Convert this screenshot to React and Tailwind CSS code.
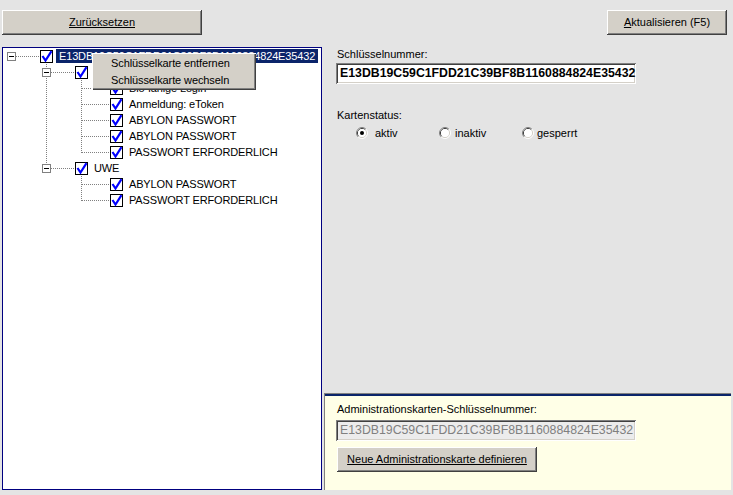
import React from 'react';

const raised =
  'bg-[#d4d0c8] shadow-[inset_-1px_-1px_0_#404040,inset_1px_1px_0_#ffffff,inset_-2px_-2px_0_#808080,inset_2px_2px_0_#d4d0c8]';
const sunken =
  'shadow-[inset_1px_1px_0_#808080,inset_-1px_-1px_0_#ffffff,inset_2px_2px_0_#404040,inset_-2px_-2px_0_#d4d0c8]';

const KEY = 'E13DB19C59C1FDD21C39BF8B1160884824E35432';

const rows = [
  { level: 0, expander: true, text: KEY, selected: true, ancestors: [] },
  { level: 1, expander: true, last: false, text: 'ADMINISTRATOR', ancestors: [] },
  { level: 2, last: false, text: 'Bio-fähige Login', ancestors: [true] },
  { level: 2, last: false, text: 'Anmeldung: eToken', ancestors: [true] },
  { level: 2, last: false, text: 'ABYLON PASSWORT', ancestors: [true] },
  { level: 2, last: false, text: 'ABYLON PASSWORT', ancestors: [true] },
  { level: 2, last: true, text: 'PASSWORT ERFORDERLICH', ancestors: [true] },
  { level: 1, expander: true, last: true, text: 'UWE', ancestors: [] },
  { level: 2, last: false, text: 'ABYLON PASSWORT', ancestors: [false] },
  { level: 2, last: true, text: 'PASSWORT ERFORDERLICH', ancestors: [false] },
];

const Dot = (props) => <line stroke="#808080" strokeDasharray="1 1" {...props} />;

const Gutter = ({ level, expander, last, ancestors }) => {
  const w = 37 + 35 * level;
  const cx = 8 + 35 * level;
  return (
    <svg width={w} height={16} className="shrink-0">
      {ancestors.map((cont, k) =>
        cont ? <Dot key={k} x1={8 + 35 * (k + 1) + 0.5} y1={0} x2={8 + 35 * (k + 1) + 0.5} y2={16} /> : null
      )}
      {level > 0 && expander && <Dot x1={cx + 0.5} y1={0} x2={cx + 0.5} y2={4} />}
      {level > 0 && expander && !last && <Dot x1={cx + 0.5} y1={12} x2={cx + 0.5} y2={16} />}
      {level > 0 && !expander && <Dot x1={cx + 0.5} y1={0} x2={cx + 0.5} y2={last ? 9 : 16} />}
      <Dot x1={expander ? cx + 5 : cx + 1} y1={8.5} x2={w} y2={8.5} />
      {expander && (
        <g>
          <rect x={cx - 4 + 0.5} y={4.5} width={8} height={8} fill="#ffffff" stroke="#808080" />
          <rect x={cx - 2} y={8} width={5} height={1} fill="#000000" />
        </g>
      )}
    </svg>
  );
};

const Check = () => (
  <svg width={13} height={13} className="shrink-0 overflow-visible">
    <rect x={0.5} y={0.5} width={12} height={12} fill="#ffffff" stroke="#000000" />
    <path d="M2.5 6 L5.5 10.5 L11.5 1.2" fill="none" stroke="#0000ff" strokeWidth={2.2} />
  </svg>
);

const Radio = ({ checked }) => (
  <svg width={12} height={12} className="shrink-0">
    <path d="M2.11 9.89 A5.5 5.5 0 0 1 9.89 2.11" fill="none" stroke="#808080" />
    <path d="M9.89 2.11 A5.5 5.5 0 0 1 2.11 9.89" fill="none" stroke="#ffffff" />
    <path d="M2.82 9.18 A4.5 4.5 0 0 1 9.18 2.82" fill="none" stroke="#404040" />
    <path d="M9.18 2.82 A4.5 4.5 0 0 1 2.82 9.18" fill="none" stroke="#d4d0c8" />
    <circle cx={6} cy={6} r={4} fill="#ffffff" />
    {checked && <circle cx={6} cy={6} r={2} fill="#000000" />}
  </svg>
);

const Button = ({ className, children }) => (
  <div className={`${raised} ${className} flex items-center justify-center text-black`}>{children}</div>
);

export default function App() {
  return (
    <div className="w-[733px] h-[495px] bg-[#e4e4e4] flex flex-col font-['Liberation_Sans',Arial,sans-serif] text-[11px] text-black leading-[13px]">
      <div className="h-[47px] flex justify-between items-start pt-[10px]">
        <Button className="ml-[2px] w-[200px] h-[25px]">
          <span className="underline">Zurücksetzen</span>
        </Button>
        <Button className="mr-[6px] w-[120px] h-[25px]">
          <span>
            <span className="underline">A</span>ktualisieren (F5)
          </span>
        </Button>
      </div>

      <div className="flex h-[443px]">
        <div className="relative ml-[2px] w-[320px] h-full border border-[#000080] bg-white">
          {rows.map((r, i) => (
            <div key={i} className="flex h-[16px] items-center">
              <Gutter {...r} />
              <Check />
              <span
                className={`ml-[3px] px-[3px] leading-[14px] tracking-[-0.15px] whitespace-nowrap ${
                  r.selected ? 'bg-[#0a246a] text-white' : ''
                }`}
              >
                {r.text}
              </span>
            </div>
          ))}

          <div className="absolute left-[89px] top-[5px] w-[164px] h-[37px] py-[2px] bg-[#d4d0c8] shadow-[inset_1px_1px_0_#ffffff,inset_-1px_-1px_0_#404040,inset_-2px_-2px_0_#808080]">
            <div className="h-[17px] flex items-center pl-[19px] tracking-[-0.1px]">Schlüsselkarte entfernen</div>
            <div className="h-[17px] flex items-center pl-[19px] tracking-[-0.1px]">Schlüsselkarte wechseln</div>
          </div>
        </div>

        <div className="flex-1 flex flex-col">
          <div className="pt-[1px] pl-[14px]">
            <div className="ml-[1px]">Schlüsselnummer:</div>
            <div
              className={`mt-[2px] w-[300px] h-[21px] bg-white ${sunken} flex items-center pl-[4px] font-bold text-[12.3px] whitespace-nowrap overflow-hidden`}
            >
              {KEY}
            </div>

            <div className="mt-[25px] ml-[1px]">Kartenstatus:</div>
            <div className="mt-[4px] h-[14px] flex items-center ml-[20px]">
              <div className="w-[83px] flex items-center">
                <Radio checked />
                <span className="ml-[7px]">aktiv</span>
              </div>
              <div className="w-[83px] flex items-center">
                <Radio />
                <span className="ml-[4px]">inaktiv</span>
              </div>
              <div className="w-[83px] flex items-center">
                <Radio />
                <span className="ml-[3px]">gesperrt</span>
              </div>
            </div>
          </div>

          <div className="mt-auto ml-[2px] mr-[2px] h-[97px] border-l border-t border-[#808080] bg-[#ffffe7]">
            <div className="h-full border-t-2 border-[#0a246a] pt-[7px] pl-[11px]">
              <div className="ml-[1px]">Administrationskarten-Schlüsselnummer:</div>
              <div
                className={`mt-[4px] w-[300px] h-[21px] bg-[#ececec] ${sunken} flex items-center pl-[4px] text-[12.3px] text-[#808080] whitespace-nowrap overflow-hidden`}
              >
                {KEY}
              </div>
              <Button className="mt-[6px] ml-[1px] w-[200px] h-[25px]">
                <span className="underline">Neue Administrationskarte definieren</span>
              </Button>
            </div>
          </div>
        </div>
      </div>
    </div>
  );
}
